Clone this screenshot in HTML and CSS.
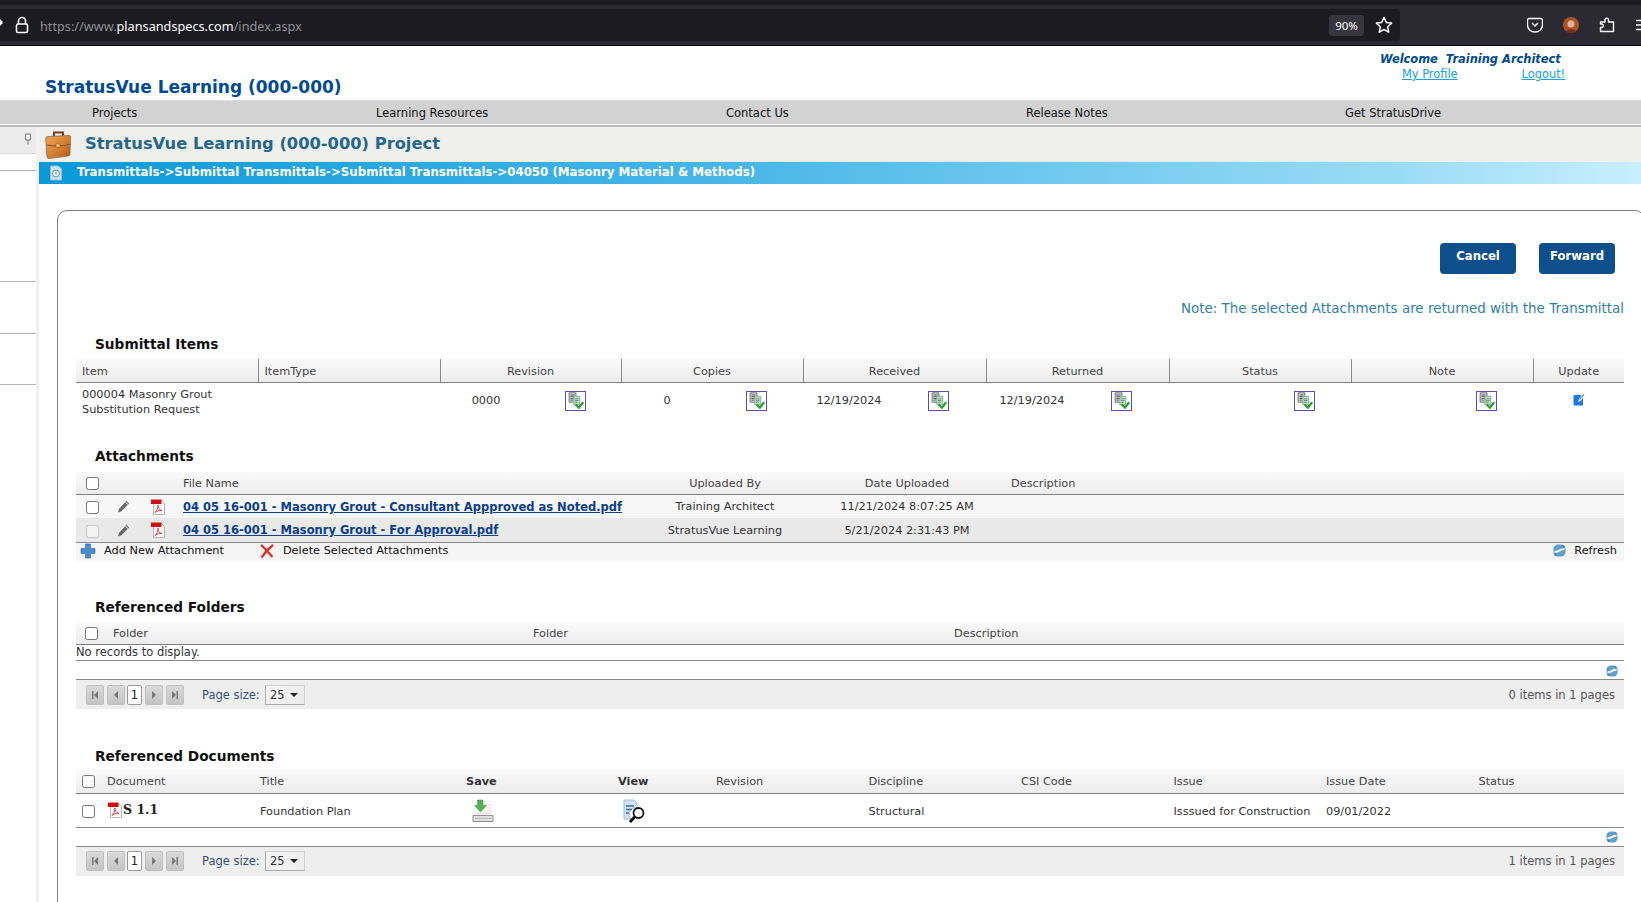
FILE: index.html
```html
<!DOCTYPE html>
<html lang="en">
<head>
<meta charset="utf-8">
<title>StratusVue</title>
<link rel="stylesheet" href="styles.css">
</head>
<body>
<svg class="defs" width="0" height="0" aria-hidden="true">
  <defs>
    <symbol id="i-copy" viewBox="0 0 20 20">
      <path d="M2.500 1h8v11h-8z" fill="#dcdcdc" stroke="#5c5c5c"/>
      <path d="M4 3.500h5M4 5.500h5M4 7.500h5M4 9.500h3" stroke="#444"/>
      <path d="M8 5h7v10H8z" fill="#bfdcc0" stroke="#7fa3a0"/>
      <path d="M9.500 8h4M9.500 10h4M9.500 12h3" stroke="#4f8f6a"/>
      <path d="M10 14.500l4 4 5-6.500" fill="none" stroke="#27a327" stroke-width="2.600"/>
    </symbol>
    <symbol id="i-pdf" viewBox="0 0 16 16">
      <path d="M3.500 1.500h8l3 3v11h-11z" fill="#fafafa" stroke="#b5b5b5"/>
      <path d="M1 0.500h10.500v4.500H1z" fill="#d01010"/>
      <path d="M5 13.500c2-2 3-4.500 3-7.500 0 3 1 4.500 4 5.500-3 0-5 .2-7 2z" fill="none" stroke="#dd4a4a"/>
    </symbol>
    <symbol id="i-pencil" viewBox="0 0 12 12">
      <path d="M1 11.500l.8-3.300L8.800.8l2.400 2.400L3.800 10.700z" fill="#6a6a6a"/>
      <path d="M7.800 1.800l2.400 2.400" stroke="#c8c8c8"/>
    </symbol>
    <symbol id="i-refresh" viewBox="0 0 14 14">
      <rect x=".5" y=".5" width="13" height="13" rx="5" fill="#5f9fc9"/>
      <path d="M1.500 8.500C4.500 9.500 9.500 4.500 12.500 5.500" fill="none" stroke="#eaf3f9" stroke-width="2.400"/>
      <path d="M9.500 1.500l3 .5-.5 3zM4.500 12.500l-3-.5.5-3z" fill="#2f79ad"/>
    </symbol>
    <symbol id="i-first" viewBox="0 0 18 20"><path d="M6 6h1.500v8H6zM12 6v8L8 10z" fill="#777"/></symbol>
    <symbol id="i-prev" viewBox="0 0 18 20"><path d="M11 6v8L7 10z" fill="#777"/></symbol>
    <symbol id="i-next" viewBox="0 0 18 20"><path d="M7 6v8l4-4z" fill="#777"/></symbol>
    <symbol id="i-last" viewBox="0 0 18 20"><path d="M6 6v8l4-4zM10.500 6H12v8h-1.500z" fill="#777"/></symbol>
  </defs>
</svg>

<header class="chrome">
  <div class="urlbar">
    <svg class="backstub" viewBox="0 0 3 10" width="3" height="10"><path d="M0 1l2.500 2.500v2L0 8z" fill="#fbfbfe"/></svg>
    <svg class="lock" viewBox="0 0 14 18" width="14" height="18"><path d="M3.500 8V5a3.500 3.500 0 0 1 7 0v3" fill="none" stroke="#fbfbfe" stroke-width="1.600"/><rect x="1.500" y="8" width="11" height="8.500" rx="1.500" fill="none" stroke="#fbfbfe" stroke-width="1.600"/></svg>
    <span class="url"><span class="url-dim">https://www.</span>plansandspecs.com<span class="url-dim">/index.aspx</span></span>
    <span class="zoom-badge">90%</span>
    <svg class="star" viewBox="0 0 18 18" width="18" height="18"><path d="M9 1.500l2.300 4.900 5.300.7-3.900 3.700 1 5.300L9 13.500l-4.700 2.600 1-5.300L1.400 7.100l5.300-.7z" fill="none" stroke="#fbfbfe" stroke-width="1.500" stroke-linejoin="round"/></svg>
  </div>
  <div class="tools">
    <svg viewBox="0 0 16 16" width="16" height="16"><path d="M2 1.500h12A1.500 1.500 0 0 1 15.500 3v5a7.500 7 0 0 1-15 0V3A1.500 1.500 0 0 1 2 1.500z" fill="none" stroke="#fbfbfe" stroke-width="1.400"/><path d="M5 6l3 3 3-3" fill="none" stroke="#fbfbfe" stroke-width="1.500"/></svg>
    <svg viewBox="0 0 16 16" width="16" height="16"><circle cx="8" cy="8" r="8" fill="#a9552a"/><circle cx="8" cy="7" r="3.500" fill="#e2b59b"/><path d="M3 15c1-4 9-4 10 0l-2 1H5z" fill="#7c2a22"/></svg>
    <svg viewBox="0 0 16 16" width="16" height="16"><path d="M6 2.500a1.800 1.800 0 0 1 3.500 0V5h5v9.500H1.500v-4H3a1.800 1.800 0 0 0 0-3.500H1.500V5H6z" fill="none" stroke="#fbfbfe" stroke-width="1.400" stroke-linejoin="round"/></svg>
    <svg class="burger" viewBox="0 0 16 16" width="16" height="16"><path d="M1 3.500h14M1 8h14M1 12.500h14" stroke="#fbfbfe" stroke-width="1.500"/></svg>
  </div>
</header>

<div class="masthead">
  <h1 class="brand">StratusVue Learning (000-000)</h1>
  <div class="welcome">
    <div class="welcome-name">Welcome&nbsp; Training Architect</div>
    <div class="welcome-links"><a href="#">My Profile</a><a href="#">Logout!</a></div>
  </div>
</div>

<nav class="mainnav">
  <a class="nav-projects" href="#">Projects</a>
  <a class="nav-learning" href="#">Learning Resources</a>
  <a class="nav-contact" href="#">Contact Us</a>
  <a class="nav-release" href="#">Release Notes</a>
  <a class="nav-drive" href="#">Get StratusDrive</a>
</nav>

<div class="shell">
  <aside class="side">
    <div class="side-head">
      <svg viewBox="0 0 8 12" width="8" height="12"><path d="M1.500 1h5v6h-5z" fill="#eee" stroke="#777"/><path d="M4 7v4.500" stroke="#777"/></svg>
    </div>
    <div class="side-row r1"></div>
    <div class="side-row r2"></div>
    <div class="side-row r3"></div>
    <div class="side-row r4"></div>
  </aside>

  <main class="content">
    <div class="project-bar">
      <svg class="case" viewBox="0 0 28 30" width="28" height="30">
        <defs><linearGradient id="cg" x1="0" y1="0" x2="1" y2="1"><stop offset="0" stop-color="#f0a55a"/><stop offset=".6" stop-color="#d07c2c"/><stop offset="1" stop-color="#a9581a"/></linearGradient></defs>
        <path d="M10 7V2.500h9V7" fill="none" stroke="#7b3f24" stroke-width="2.200"/>
        <path d="M4 6.500l21-1a1.500 1.500 0 0 1 1.500 1.500L26 24a2 2 0 0 1-2 2L5 28.500a2 2 0 0 1-2-2L1.800 9A2.200 2.200 0 0 1 4 6.500z" fill="url(#cg)" stroke="#8a6a4c" stroke-width=".8"/>
        <path d="M2.500 15c8 1.500 16 1.200 24-.8" fill="none" stroke="#8a4f1c" stroke-width="1"/>
        <path d="M12 14h4v3h-4z" fill="#f3c98f" stroke="#8a4f1c" stroke-width=".5"/>
      </svg>
      <span class="project-title">StratusVue Learning (000-000) Project</span>
    </div>
    <div class="crumb">
      <svg class="crumb-icon" viewBox="0 0 14 16" width="14" height="16"><path d="M1.500 1h8l3 3v11h-11z" fill="#cfe3f3" stroke="#9bbcd6"/><circle cx="7" cy="8.500" r="3.500" fill="#f3f8fc" stroke="#5f90b5"/><path d="M7 7v3" stroke="#5f90b5"/></svg>
      <span>Transmittals-&gt;Submittal Transmittals-&gt;Submittal Transmittals-&gt;04050 (Masonry Material &amp; Methods)</span>
    </div>

    <section class="panel">
      <div class="actions">
        <button class="btn" type="button">Cancel</button>
        <button class="btn" type="button">Forward</button>
      </div>
      <p class="note">Note: The selected Attachments are returned with the Transmittal</p>

      <h2 class="sec sec-items">Submittal Items</h2>
      <table class="grid items">
        <colgroup><col class="c182"><col class="c182"><col class="c181"><col class="c182"><col class="c183"><col class="c183"><col class="c182"><col class="c182"><col></colgroup>
        <thead><tr>
          <th class="left">Item</th><th class="left">ItemType</th><th>Revision</th><th>Copies</th><th>Received</th><th>Returned</th><th>Status</th><th>Note</th><th>Update</th>
        </tr></thead>
        <tbody><tr>
          <td class="item-name">000004 Masonry Grout<br>Substitution Request</td>
          <td></td>
          <td><div class="cellpair"><span class="val">0000</span><span class="copybox"><svg width="17" height="17"><use href="#i-copy"/></svg></span></div></td>
          <td><div class="cellpair"><span class="val">0</span><span class="copybox"><svg width="17" height="17"><use href="#i-copy"/></svg></span></div></td>
          <td><div class="cellpair"><span class="val">12/19/2024</span><span class="copybox"><svg width="17" height="17"><use href="#i-copy"/></svg></span></div></td>
          <td><div class="cellpair"><span class="val">12/19/2024</span><span class="copybox"><svg width="17" height="17"><use href="#i-copy"/></svg></span></div></td>
          <td><div class="cellpair"><span class="val"></span><span class="copybox"><svg width="17" height="17"><use href="#i-copy"/></svg></span></div></td>
          <td><div class="cellpair"><span class="val"></span><span class="copybox"><svg width="17" height="17"><use href="#i-copy"/></svg></span></div></td>
          <td class="update"><svg viewBox="0 0 12 12" width="12" height="12"><path d="M.5 1h8L6 5 5 8l3-1.500 2-2.500V11.500H.5z" fill="#2277e6"/><path d="M6.500 5.500L11 .5" stroke="#5aa0ee" stroke-width="1.500"/></svg></td>
        </tr></tbody>
      </table>

      <h2 class="sec sec-attach">Attachments</h2>
      <table class="grid attach">
        <colgroup><col class="a-chk"><col class="a-pen"><col class="a-pdf"><col class="a-name"><col class="a-by"><col class="a-date"><col></colgroup>
        <thead><tr>
          <th><span class="chk"></span></th><th></th><th></th><th class="left">File Name</th><th>Uploaded By</th><th>Date Uploaded</th><th class="left">Description</th>
        </tr></thead>
        <tbody>
          <tr class="row-a">
            <td><span class="chk"></span></td>
            <td><svg width="13" height="13"><use href="#i-pencil"/></svg></td>
            <td><svg width="16" height="16"><use href="#i-pdf"/></svg></td>
            <td class="left"><a class="file" href="#">04 05 16-001 - Masonry Grout - Consultant Appproved as Noted.pdf</a></td>
            <td>Training Architect</td><td>11/21/2024 8:07:25 AM</td><td></td>
          </tr>
          <tr class="row-b">
            <td><span class="chk chk-off"></span></td>
            <td><svg width="13" height="13"><use href="#i-pencil"/></svg></td>
            <td><svg width="16" height="16"><use href="#i-pdf"/></svg></td>
            <td class="left"><a class="file" href="#">04 05 16-001 - Masonry Grout - For Approval.pdf</a></td>
            <td>StratusVue Learning</td><td>5/21/2024 2:31:43 PM</td><td></td>
          </tr>
        </tbody>
      </table>
      <div class="cmdbar">
        <svg class="cmd-add" viewBox="0 0 16 16" width="16" height="16"><path d="M5.500 1h5v4.500H15v5h-4.500V15h-5v-4.500H1v-5h4.500z" fill="#4a8ccb" stroke="#2a6aa6" stroke-width=".6"/></svg>
        <span class="cmd-text-add">Add New Attachment</span>
        <svg class="cmd-del" viewBox="0 0 14 14" width="14" height="14"><path d="M1 1c3 2 7 7 11.500 12M13 1C9 4 5 8 1.500 13.500" fill="none" stroke="#e02b20" stroke-width="2.200"/></svg>
        <span>Delete Selected Attachments</span>
        <svg class="cmd-ref" width="13" height="13"><use href="#i-refresh"/></svg>
        <span class="cmd-text-ref">Refresh</span>
      </div>

      <h2 class="sec sec-folders">Referenced Folders</h2>
      <table class="grid folders">
        <colgroup><col class="f-chk"><col class="f-col"><col class="f-col2"><col></colgroup>
        <thead><tr><th><span class="chk"></span></th><th class="left">Folder</th><th class="left">Folder</th><th class="left">Description</th></tr></thead>
      </table>
      <div class="norec">No records to display.</div>
      <div class="refresh-row"><svg width="12" height="12"><use href="#i-refresh"/></svg></div>
      <div class="pager">
        <span class="pbtn"><svg width="18" height="20"><use href="#i-first"/></svg></span>
        <span class="pbtn"><svg width="18" height="20"><use href="#i-prev"/></svg></span>
        <span class="pcur">1</span>
        <span class="pbtn"><svg width="18" height="20"><use href="#i-next"/></svg></span>
        <span class="pbtn"><svg width="18" height="20"><use href="#i-last"/></svg></span>
        <span class="plabel">Page size:</span>
        <span class="psel"><span>25</span><i></i></span>
        <span class="pinfo">0 items in 1 pages</span>
      </div>

      <h2 class="sec sec-docs">Referenced Documents</h2>
      <table class="grid docs">
        <colgroup><col class="d-chk"><col class="d-doc"><col class="d-title"><col class="d-save"><col class="d-view"><col class="d-std"><col class="d-std"><col class="d-std"><col class="d-std"><col class="d-std"><col></colgroup>
        <thead><tr>
          <th><span class="chk"></span></th><th class="left">Document</th><th class="left">Title</th>
          <th class="left strong">Save</th><th class="left strong">View</th>
          <th class="left">Revision</th><th class="left">Discipline</th><th class="left">CSI Code</th><th class="left">Issue</th><th class="left">Issue Date</th><th class="left">Status</th>
        </tr></thead>
        <tbody><tr>
          <td><span class="chk"></span></td>
          <td class="left"><span class="docname"><svg width="16" height="16"><use href="#i-pdf"/></svg>S 1.1</span></td>
          <td class="left">Foundation Plan</td>
          <td class="left"><svg class="ic-save" viewBox="0 0 24 24" width="24" height="24"><path d="M2 16.500h20v6H2z" fill="#e2e2e2" stroke="#8c8c8c"/><path d="M4 19.500h16" stroke="#b5b5b5"/><path d="M13 6h8M13 9h8M13 12h8M4 14.500h17" stroke="#e7d3d3"/><path d="M6.500 1h5.500v5.500h3.500L9.500 13 3.500 6.500h3z" fill="#56b156" stroke="#3d8f3d" stroke-width=".5"/></svg></td>
          <td class="left"><svg class="ic-view" viewBox="0 0 24 24" width="24" height="24"><path d="M2 1h10l3 3v5a6.500 6.500 0 0 0-6 11H2z" fill="#cfe1f4" stroke="#9fbbd9"/><path d="M4 7h8M4 10.500h6M4 14h3" stroke="#3a6ea5" stroke-width="1.700"/><circle cx="16.500" cy="14" r="5" fill="#fff" stroke="#111" stroke-width="1.800"/><path d="M12.800 17.800L8 23" stroke="#111" stroke-width="2.800"/></svg></td>
          <td></td>
          <td class="left">Structural</td>
          <td></td>
          <td class="left">Isssued for Construction</td>
          <td class="left">09/01/2022</td>
          <td></td>
        </tr></tbody>
      </table>
      <div class="refresh-row docs-refresh"><svg width="12" height="12"><use href="#i-refresh"/></svg></div>
      <div class="pager">
        <span class="pbtn"><svg width="18" height="20"><use href="#i-first"/></svg></span>
        <span class="pbtn"><svg width="18" height="20"><use href="#i-prev"/></svg></span>
        <span class="pcur">1</span>
        <span class="pbtn"><svg width="18" height="20"><use href="#i-next"/></svg></span>
        <span class="pbtn"><svg width="18" height="20"><use href="#i-last"/></svg></span>
        <span class="plabel">Page size:</span>
        <span class="psel"><span>25</span><i></i></span>
        <span class="pinfo">1 items in 1 pages</span>
      </div>
    </section>
  </main>
</div>
</body>
</html>
```

FILE: styles.css
```css
* { box-sizing: border-box; }
html, body { margin: 0; height: 902px; overflow: hidden; background: #fff; }
body { font-family: "DejaVu Sans", Verdana, sans-serif; font-size: 11.5px; color: #333; }
.defs { position: absolute; }
a { color: inherit; }

/* browser chrome */
.chrome { height: 46px; background: #2b2a33; border-top: 5px solid #1c1b22; border-bottom: 1px solid #0c0c0d; display: flex; align-items: center; }
.urlbar { width: 1400px; flex: none; height: 32px; background: #1c1b22; border-radius: 0 4px 4px 0; display: flex; align-items: center; }
.backstub { flex: none; margin-right: 12px; margin-bottom: 5px; }
.lock { flex: none; }
.url { margin-left: 11px; padding-top: 1px; font-family: "Noto Sans", sans-serif; font-size: 12.7px; color: #fbfbfe; }
.url-dim { color: #8f8f93; }
.zoom-badge { margin-left: auto; width: 35px; height: 21px; background: #37363e; border-radius: 3px; color: #fbfbfe; font-family: "Noto Sans", sans-serif; font-size: 11.5px; display: flex; align-items: center; justify-content: center; }
.star { margin: 0 7px 0 11px; flex: none; }
.tools { display: flex; align-items: center; gap: 20px; margin-left: 127px; flex: none; }
.tools svg { flex: none; }

/* masthead */
.masthead { height: 54px; position: relative; padding-left: 45px; }
.brand { margin: 0; padding-top: 31px; font-size: 17px; line-height: 20px; font-weight: 700; color: #004a94; }
.welcome { position: absolute; top: 6px; left: 1380px; width: 220px; }
.welcome-name { font-size: 11.45px; font-weight: 700; font-style: italic; color: #004a94; line-height: 15px; }
.welcome-links { font-size: 11.4px; line-height: 15px; color: #16a0e6; display: flex; gap: 64px; padding-left: 22px; }

/* nav */
.mainnav { height: 27px; background: #d2d2d2; border-top: 1px solid #dedede; border-bottom: 2px solid #bdbdbd; display: flex; align-items: center; color: #111; font-size: 11.5px; box-shadow: inset 0 -1px 0 #fff; padding-left: 92px; }
.mainnav a { text-decoration: none; flex: none; padding-bottom: 1px; }
.nav-projects { width: 284px; }
.nav-learning { width: 350px; }
.nav-contact { width: 300px; }
.nav-release { width: 319px; }

/* shell */
.shell { display: flex; height: 775px; }
.side { width: 39px; flex: none; border-right: 3px solid #f0f0f0; }
.side-head { height: 27px; background: #ececec; border-bottom: 1px solid #d8d8d8; display: flex; justify-content: flex-end; align-items: flex-start; padding: 6px 4px 0 0; }
.side-row { border-bottom: 1px solid #b5b5b5; }
.r1 { height: 17px; }
.r2 { height: 111px; }
.r3 { height: 52px; }
.r4 { height: 51px; }

.content { flex: 1; min-width: 0; }
.project-bar { height: 35px; background: #eff0eb; display: flex; align-items: center; padding-left: 5px; }
.case { flex: none; }
.project-title { margin-left: 13px; padding-bottom: 2px; font-size: 16.3px; font-weight: 700; color: #25668c; }
.crumb { height: 22px; display: flex; align-items: center; padding-left: 10px; background: linear-gradient(90deg, #0a99d8 0%, #4cb8e8 45%, #9adcf6 85%, #c8effd 100%); color: #fff; font-size: 11.8px; font-weight: 700; }
.crumb span { margin-left: 14px; padding-bottom: 2px; }
.crumb-icon { flex: none; }

/* panel */
.panel { margin: 26px 0 0 18px; width: 1588px; height: 701px; border: 1px solid #7d7d7d; border-radius: 10px 10px 0 0; padding: 32px 0 0 18px; }
.actions { width: 1539px; display: flex; justify-content: flex-end; gap: 23px; }
.btn { width: 76px; height: 31px; border: 0; border-radius: 4px; background: #0d4f8b; color: #fff; font: 700 11.7px "DejaVu Sans", sans-serif; padding: 0 0 6px; }
.note { width: 1548px; margin: 27px 0 0; text-align: right; color: #2f7fa8; font-size: 13.45px; line-height: 16px; }
.sec { margin: 0; padding-left: 19px; font-size: 13.7px; line-height: 18px; font-weight: 700; color: #111; }
.sec-items { margin-top: 18px; }
.sec-attach { margin-top: 15px; }
.sec-folders { margin-top: 37px; }
.sec-docs { margin-top: 38px; }

/* grids */
.grid { width: 1548px; border-collapse: collapse; table-layout: fixed; font-size: 11.3px; color: #333; }
.grid th { font-weight: 400; height: 23px; padding: 1px 6px 0; text-align: center; background: linear-gradient(#fafafa, #ececec); border-bottom: 1px solid #7f7f7f; color: #444; }
.grid th.left, .grid td.left { text-align: left; }
.grid th.strong { font-weight: 700; color: #333; }
.grid td { padding: 0 6px; text-align: center; }
.items { margin-top: 6px; }
.items th { padding-top: 3px; }
.items th + th { border-left: 1px solid #8a8a8a; }
.c182 { width: 182px; }
.c181 { width: 181px; }
.c183 { width: 183px; }
.items td { height: 50px; vertical-align: top; padding-top: 7px; }
.items td.item-name { text-align: left; line-height: 15px; padding-top: 4px; }
.items td.update { padding-top: 11px; }
.cellpair { display: flex; align-items: center; height: 22px; }
.val { width: 97px; flex: none; text-align: center; padding-right: 17px; }
.copybox { width: 21px; height: 20px; flex: none; border: 1px solid #5a4fb0; background: #fff; display: flex; align-items: center; justify-content: center; margin-left: 22px; }

.attach { margin-top: 7px; }
.attach th { height: 22px; }
.a-chk { width: 32px; }
.a-pen { width: 31px; }
.a-pdf { width: 38px; }
.a-name { width: 464px; }
.a-by { width: 168px; }
.a-date { width: 196px; }
.attach th:first-child, .folders th:first-child, .docs th:first-child { padding: 0; }
.attach td { height: 24px; padding: 1px 6px 0; }
.attach td:first-child, .docs td:first-child { padding: 2px 0 0; }
.attach td svg { display: block; margin: 0 auto; }
.row-a td { background: #f7f7f7; }
.row-b td { background: #e9e9e9; border-bottom: 1px solid #8a8a8a; }
.chk { display: inline-block; width: 13px; height: 13px; border: 1px solid #767676; border-radius: 2.500px; background: #fff; vertical-align: middle; }
.chk-off { border-color: #c4c4c4; background: #f3f3f3; }
.file { font-weight: 700; font-size: 11.5px; color: #0b3d8f; }

.cmdbar { width: 1548px; height: 18px; background: #f5f5f5; display: flex; align-items: center; font-size: 11.3px; color: #111; padding: 0 0 2px 4px; }
.cmdbar svg { flex: none; }
.cmd-text-add { margin-left: 8px; }
.cmd-del { margin: 0 9px 0 36px; }
.cmd-ref { margin-left: auto; }
.cmd-text-ref { margin: 0 7px 0 8px; }

.folders { margin-top: 7px; }
.folders th { height: 22px; }
.f-chk { width: 31px; }
.f-col { width: 420px; }
.f-col2 { width: 421px; }
.norec { width: 1548px; height: 16px; line-height: 14px; border-bottom: 1px solid #8a8a8a; font-size: 11.5px; }
.refresh-row { width: 1548px; height: 19px; border-bottom: 1px solid #8a8a8a; display: flex; justify-content: flex-end; align-items: center; padding: 1px 6px 0 0; }
.pager { width: 1548px; height: 29px; background: #eeeeee; display: flex; align-items: center; padding-left: 10px; font-size: 11.5px; color: #35507a; }
.pbtn { width: 18px; height: 20px; background: linear-gradient(#dadada, #c4c4c4); border: 1px solid #c0c0c0; border-radius: 2px; margin-right: 3px; display: flex; align-items: center; justify-content: center; flex: none; }
.pbtn svg { margin: -1px; flex: none; }
.pcur { width: 15px; height: 20px; background: #fff; border: 1px solid #999; border-radius: 2px; margin: 0 3px 0 -1px; color: #222; text-align: center; line-height: 18px; flex: none; }
.plabel { margin-left: 15px; width: 63px; flex: none; }
.psel { width: 40px; height: 20px; border: 1px solid #d0d0d0; border-left-color: #aaa; border-bottom-color: #aaa; background: linear-gradient(90deg, #f4f4f4, #eee); display: flex; align-items: center; justify-content: space-between; padding: 0 6px 0 4px; color: #333; flex: none; }
.psel i { width: 0; height: 0; border-left: 4px solid transparent; border-right: 4px solid transparent; border-top: 4px solid #222; }
.pinfo { margin-left: auto; margin-right: 9px; color: #555; }

.docs { margin-top: 5px; }
.d-chk { width: 25px; }
.d-doc { width: 153px; }
.d-title { width: 206px; }
.d-save { width: 152px; }
.d-view { width: 98px; }
.d-std { width: 152.500px; }
.docs td { height: 34px; padding-top: 2px; border-bottom: 1px solid #8a8a8a; }
.docname { display: inline-flex; align-items: center; font-family: "DejaVu Serif", serif; font-size: 12.5px; font-weight: 700; color: #222; }
.docname svg { flex: none; }
.ic-save { display: block; margin-left: 5px; }
.ic-view { display: block; margin-left: 4px; }
.docs-refresh { height: 19px; }
```
